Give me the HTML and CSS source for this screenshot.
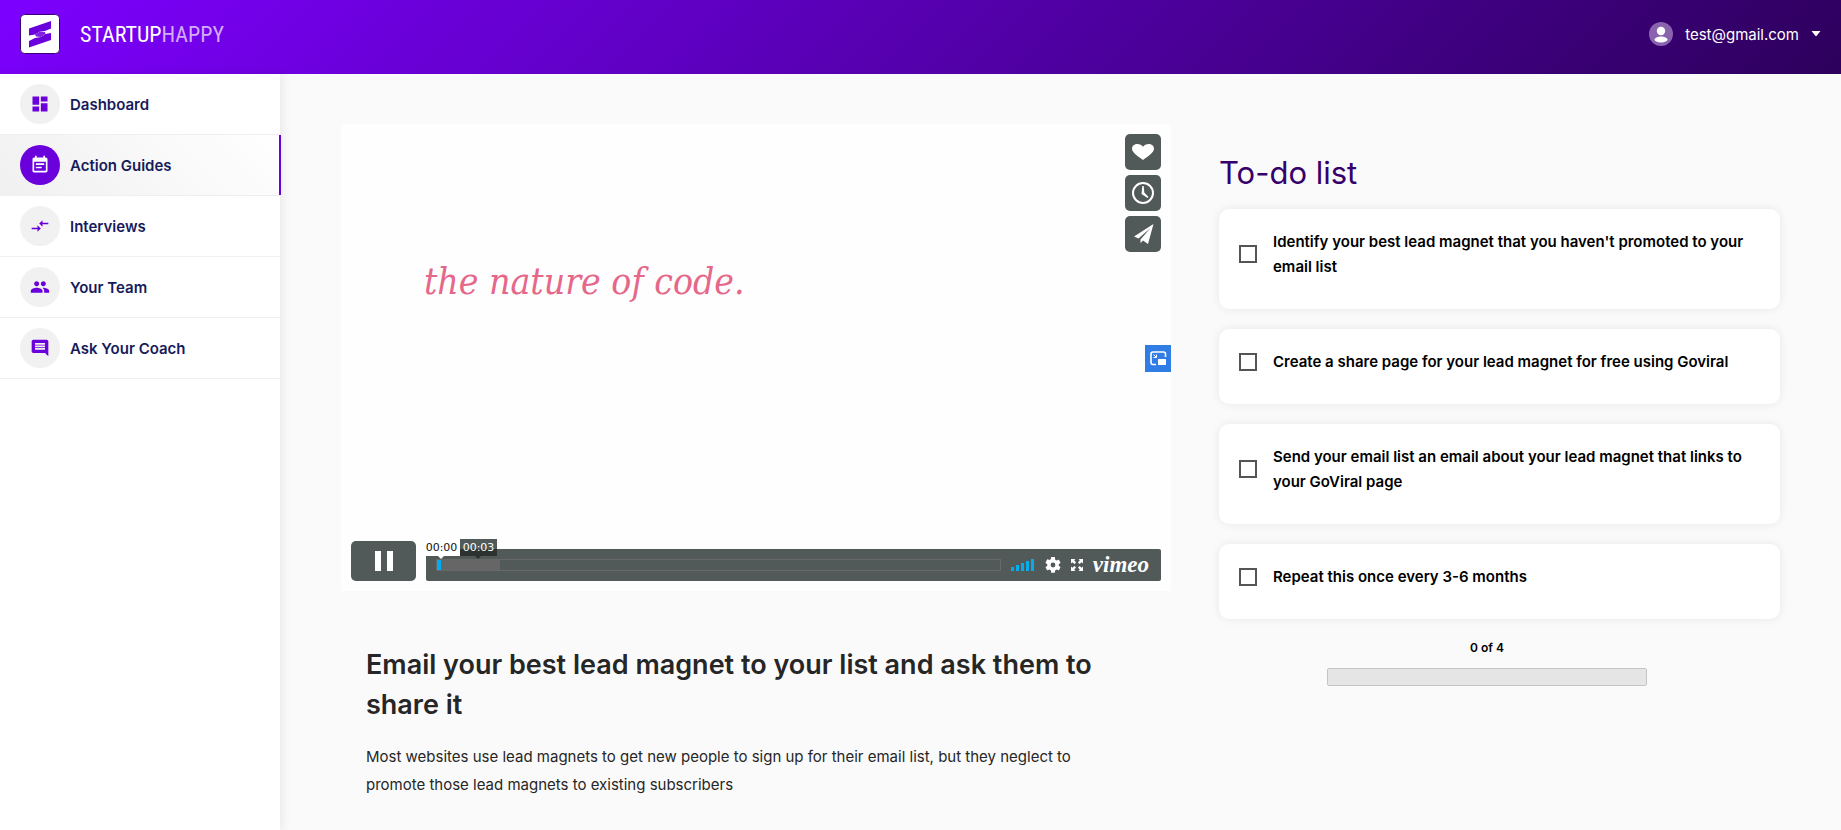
FILE: index.html
```html
<!DOCTYPE html>
<html lang="en">
<head>
<meta charset="utf-8">
<title>StartupHappy – Action Guides</title>
<link rel="stylesheet" href="styles.css">
</head>
<body>
<header class="topbar">
  <a class="brand" href="#">
    <span class="brand-mark">
      <svg viewBox="0 0 40 40" width="40" height="40" aria-hidden="true">
        <rect x="0.5" y="0.5" width="39" height="39" rx="4" fill="#fff" stroke="#3a0078"/>
        <path d="M9 14.500L31 7V14.500L25 17L20 17.500L15 20.500L9 21.500Z" fill="#6a00dc"/>
        <path d="M31 19V26L9 33.500V27L15 24L21 23L25.500 20Z" fill="#6a00dc"/>
        <path d="M15 20.500L20 17.500L25 18L25.500 20L21 23L16 22.500Z" fill="#7e22e0"/>
      </svg>
    </span>
    <span class="brand-name">STARTUP<span class="brand-soft">HAPPY</span></span>
  </a>
  <button class="account" type="button">
    <svg viewBox="0 0 24 24" width="24" height="24" aria-hidden="true">
      <circle cx="12" cy="12" r="12" fill="#8a63ae"/>
      <circle cx="12" cy="9" r="4.200" fill="#fff"/>
      <ellipse cx="12" cy="17.500" rx="6.500" ry="3" fill="#fff"/>
    </svg>
    <span class="account-mail">test@gmail.com</span>
    <svg viewBox="0 0 10 6" width="10" height="6" aria-hidden="true"><path d="M0.500 0H9.500L5.500 5H4.500Z" fill="#fff"/></svg>
  </button>
</header>
<div class="shell">
  <nav class="sidebar">
    <a class="nav-item" href="#">
      <span class="nav-icon"><svg viewBox="0 0 24 24" width="20" height="20"><path d="M3 13h8V3H3v10zm0 8h8v-6H3v6zm10 0h8V11h-8v10zm0-18v6h8V3h-8z"/></svg></span>
      <span>Dashboard</span>
    </a>
    <a class="nav-item nav-item-active" href="#" aria-current="page">
      <span class="nav-icon"><svg viewBox="0 0 24 24" width="20" height="20"><path d="M17 10H7v2h10v-2zm2-7h-1V1h-2v2H8V1H6v2H5c-1.110 0-1.990.9-1.990 2L3 19c0 1.100.89 2 2 2h14c1.100 0 2-.9 2-2V5c0-1.100-.9-2-2-2zm0 16H5V8h14v11zm-5-5H7v2h7v-2z"/></svg></span>
      <span>Action Guides</span>
    </a>
    <a class="nav-item" href="#">
      <span class="nav-icon"><svg viewBox="0 0 24 24" width="20" height="20"><path d="M9.010 14H2v2h7.010v3L13 15l-3.990-4v3zm5.980-1v-3H22V8h-7.010V5L11 9l3.990 4z"/></svg></span>
      <span>Interviews</span>
    </a>
    <a class="nav-item" href="#">
      <span class="nav-icon"><svg viewBox="0 0 24 24" width="20" height="20"><path d="M16 11c1.660 0 2.990-1.340 2.990-3S17.660 5 16 5s-3 1.340-3 3 1.340 3 3 3zm-8 0c1.660 0 2.990-1.340 2.990-3S9.660 5 8 5 5 6.340 5 8s1.340 3 3 3zm0 2c-2.330 0-7 1.170-7 3.500V19h14v-2.500c0-2.330-4.670-3.500-7-3.500zm8 0c-.29 0-.62.02-.97.05 1.160.84 1.970 1.970 1.970 3.450V19h6v-2.500c0-2.330-4.670-3.500-7-3.500z"/></svg></span>
      <span>Your Team</span>
    </a>
    <a class="nav-item" href="#">
      <span class="nav-icon"><svg viewBox="0 0 24 24" width="20" height="20"><path d="M21.990 4c0-1.100-.89-2-1.990-2H4c-1.100 0-2 .9-2 2v12c0 1.100.9 2 2 2h14l4 4-.01-18zM18 14H6v-2h12v2zm0-3H6V9h12v2zm0-3H6V6h12v2z"/></svg></span>
      <span>Ask Your Coach</span>
    </a>
  </nav>
  <main class="content">
    <section class="guide">
      <div class="player">
        <p class="frame-title">the nature of code.</p>
        <div class="side-actions">
          <button type="button" aria-label="Like"><svg viewBox="0 0 36 36" width="36" height="36"><path d="M18 26C14 23 7 19 7 14.800C7 11.500 9.700 10 12.200 10C14.800 10 17 11.300 18 12.800C19 11.300 21.200 10 23.800 10C26.300 10 29 11.500 29 14.800C29 19 22 23 18 26Z" fill="#fff"/></svg></button>
          <button type="button" aria-label="Watch later"><svg viewBox="0 0 36 36" width="36" height="36"><circle cx="18" cy="18" r="10" fill="none" stroke="#fff" stroke-width="2"/><path d="M17.300 11H18.700L19.300 17.500L23.500 22L22.500 23L16.500 19Z" fill="#fff"/></svg></button>
          <button type="button" aria-label="Share"><svg viewBox="0 0 36 36" width="36" height="36"><path d="M28.500 8L9 20.500L13.500 22.500L25.500 12L15.500 23.500V27L18 24.500L23 28Z" fill="#fff"/></svg></button>
        </div>
        <button class="pip" type="button" aria-label="Picture in picture"><svg viewBox="0 0 26 27" width="26" height="27"><path d="M11 19.500H8Q6 19.500 6 17.500V9Q6 7 8 7H18.500Q20.500 7 20.500 9V12" fill="none" stroke="#fff" stroke-width="1.600"/><rect x="13" y="14" width="8" height="6" rx="0.500" fill="#fff"/><path d="M8.500 9.500L11 12M11.500 9.500V12.500H8.500" fill="none" stroke="#fff"/></svg></button>
        <div class="controls">
          <button class="pause" type="button" aria-label="Pause"><span></span><span></span></button>
          <div class="control-bar">
            <div class="track">
              <div class="loaded"></div>
              <span class="time time-now">00:00</span>
              <span class="time time-loaded">00:03</span>
            </div>
            <button type="button" aria-label="Volume"><svg viewBox="0 0 24 12" width="24" height="12"><path d="M0 8h3v4H0zM5 6h3v6H5zM10 4h3v8h-3zM15 2h3v10h-3zM20 0h3v12h-3z" fill="#00adef"/></svg></button>
            <button type="button" aria-label="Settings"><svg viewBox="2 2 20 20" width="16" height="16"><path d="M19.140 12.940c.04-.3.060-.61.060-.94s-.02-.64-.07-.94l2.030-1.580a.49.49 0 0 0 .12-.61l-1.920-3.320a.49.49 0 0 0-.59-.22l-2.390.96a7 7 0 0 0-1.620-.94l-.36-2.540A.48.48 0 0 0 13.920 2h-3.840a.48.48 0 0 0-.47.410l-.36 2.540c-.59.240-1.130.57-1.620.94l-2.390-.96a.48.48 0 0 0-.59.220L2.740 8.870a.48.48 0 0 0 .12.610l2.030 1.580a7.500 7.500 0 0 0 0 1.880l-2.030 1.580a.49.49 0 0 0-.12.610l1.920 3.320c.12.220.37.290.59.220l2.390-.96c.5.380 1.030.7 1.620.94l.36 2.540c.05.240.24.410.48.410h3.840c.24 0 .44-.17.470-.41l.36-2.540a7 7 0 0 0 1.620-.94l2.390.96c.22.080.47 0 .59-.22l1.920-3.320a.48.48 0 0 0-.12-.61zM12 15a3 3 0 1 1 0-6 3 3 0 0 1 0 6z" fill="#fff"/></svg></button>
            <button type="button" aria-label="Full screen"><svg viewBox="0 0 12 12" width="12" height="12"><path d="M0 0H4.500L3.200 1.300L5 3.500L3.500 5L1.300 3.200L0 4.500ZM12 0V4.500L10.700 3.200L8.500 5L7 3.500L8.800 1.300L7.500 0ZM0 12V7.500L1.300 8.800L3.500 7L5 8.500L3.200 10.700L4.500 12ZM12 12H7.500L8.800 10.700L7 8.500L8.500 7L10.700 8.800L12 7.500Z" fill="#fff"/></svg></button>
            <a class="vimeo" href="#">vimeo</a>
          </div>
        </div>
      </div>
      <article class="article">
        <h1>Email your best lead magnet to your list and ask them to share it</h1>
        <p>Most websites use lead magnets to get new people to sign up for their email list, but they neglect to promote those lead magnets to existing subscribers</p>
      </article>
    </section>
    <section class="todo">
      <h2>To-do list</h2>
      <label class="card"><input type="checkbox"><span>Identify your best lead magnet that you haven't promoted to your email list</span></label>
      <label class="card"><input type="checkbox"><span>Create a share page for your lead magnet for free using Goviral</span></label>
      <label class="card"><input type="checkbox"><span>Send your email list an email about your lead magnet that links to your GoViral page</span></label>
      <label class="card"><input type="checkbox"><span>Repeat this once every 3-6 months</span></label>
      <div class="progress">
        <label for="done">0 of 4</label>
        <progress id="done" value="0" max="4"></progress>
      </div>
    </section>
  </main>
</div>
</body>
</html>
```
FILE: styles.css
```css
* {
  box-sizing: border-box;
}

body {
  margin: 0;
  min-height: 100vh;
  display: flex;
  flex-direction: column;
  background: #fafafa;
  color: #262626;
  font-family: Inter, "Liberation Sans", sans-serif;
  font-size: 15px;
}

button {
  margin: 0;
  padding: 0;
  border: 0;
  background: none;
  color: inherit;
  font: inherit;
  cursor: pointer;
}

a {
  color: inherit;
  text-decoration: none;
}

svg {
  display: block;
}

/* Header */

.topbar {
  height: 74px;
  padding: 0 20px 6px;
  display: flex;
  align-items: center;
  justify-content: space-between;
  background: linear-gradient(135deg, #7d00ff, #2d005c);
  color: #fff;
}

.brand {
  display: flex;
  align-items: center;
  gap: 20px;
}

.brand-name {
  font-family: "Roboto Condensed", Roboto, sans-serif;
  font-size: 22px;
  font-weight: 400;
}

.brand-soft {
  color: #d3acf8;
}

.account {
  display: flex;
  align-items: center;
  gap: 12px;
}

/* Sidebar */

.shell {
  flex: 1;
  display: flex;
}

.sidebar {
  flex: none;
  width: 280px;
  background: #fff;
  box-shadow: 2px 0 10px rgba(0, 0, 0, 0.08);
}

.nav-item {
  height: 61px;
  padding: 0 20px;
  display: flex;
  align-items: center;
  gap: 10px;
  border-bottom: 1px solid #efefef;
  color: #161b5c;
  font-weight: 600;
}

.nav-item-active {
  margin-right: -1px;
  background: linear-gradient(45deg, #f0f0f0, #fff);
  box-shadow: inset -2px 0 #6a00dc;
}

.nav-icon {
  width: 40px;
  height: 40px;
  display: grid;
  place-items: center;
  border-radius: 50%;
  background: #f1f1f1;
  fill: #6a00dc;
}

.nav-item-active .nav-icon {
  background: #6a00dc;
  fill: #fff;
}

/* Main columns */

.content {
  flex: 1;
  padding: 50px 61px 30px;
  display: grid;
  grid-template-columns: 830fr 561fr;
  align-items: start;
  gap: 48px;
}

/* Video player */

.player {
  position: relative;
  aspect-ratio: 16 / 9;
  background: #fefefe;
}

.frame-title {
  position: absolute;
  top: 28%;
  left: 10%;
  margin: 0;
  color: #e5688a;
  font: italic 37px/54px "DejaVu Serif Condensed", "DejaVu Serif", serif;
}

.side-actions {
  position: absolute;
  top: 10px;
  right: 10px;
  display: grid;
  gap: 5px;
}

.side-actions button {
  border-radius: 5px;
  background: #515a58;
}

.pip {
  position: absolute;
  top: 221px;
  right: 0;
  background: #2f7de5;
}

.controls {
  position: absolute;
  right: 10px;
  bottom: 10px;
  left: 10px;
  display: flex;
  align-items: flex-end;
  gap: 10px;
}

.pause {
  width: 65px;
  height: 40px;
  display: flex;
  align-items: center;
  justify-content: center;
  gap: 6px;
  border-radius: 5px;
  background: #515a58;
}

.pause span {
  width: 6px;
  height: 20px;
  background: #fff;
}

.control-bar {
  flex: 1;
  height: 32px;
  padding: 0 12px 0 10px;
  display: flex;
  align-items: center;
  gap: 10px;
  border-radius: 2px;
  background: #515a58;
}

.track {
  position: relative;
  flex: 1;
  height: 12px;
  border: 1px solid #686868;
}

.loaded {
  width: 63px;
  height: 10px;
  border-left: 4px solid #00adef;
  background: #666;
}

.time {
  position: absolute;
  bottom: 14px;
  width: 37px;
  height: 17px;
  font: 11px/17px "DejaVu Sans", sans-serif;
  text-align: center;
}

.time::after {
  position: absolute;
  top: 17px;
  left: 15px;
  border: 3px solid transparent;
  border-bottom: 0;
  content: "";
}

.time-now {
  left: -14px;
  background: #fff;
  color: #111;
}

.time-now::after {
  border-top-color: #fff;
}

.time-loaded {
  left: 23px;
  background: linear-gradient(#515a58 60%, #2b3230 60%);
  color: #fff;
}

.time-loaded::after {
  border-top-color: #2b3230;
}

.vimeo {
  color: #fff;
  font: italic bold 23px/32px "Liberation Serif", serif;
}

/* Guide text */

.article {
  padding: 54px 56px 0 25px;
}

.article h1 {
  margin: 0 0 18px;
  font-size: 27px;
  font-weight: 600;
  line-height: 40px;
}

.article p {
  margin: 0;
  font-size: 15px;
  line-height: 28px;
}

/* To-do list */

.todo {
  padding-top: 25px;
  display: grid;
  gap: 20px;
}

.todo h2 {
  margin: 0 0 -8px;
  color: #35006b;
  font-size: 31px;
  font-weight: 400;
  line-height: 48px;
}

.card {
  padding: 20px 20px 30px;
  display: flex;
  align-items: center;
  gap: 16px;
  border-radius: 10px;
  background: #fff;
  box-shadow: 0 0 10px rgba(0, 0, 0, 0.08);
  color: #000;
  font-weight: 600;
  line-height: 25px;
}

.card input {
  flex: none;
  width: 18px;
  height: 18px;
  margin: 0;
  appearance: none;
  border: 2px solid #555;
}

.progress {
  padding-right: 25px;
  display: grid;
  justify-items: center;
  gap: 11px;
  color: #000;
  font-size: 12px;
  font-weight: 600;
  line-height: 18px;
}

.progress progress {
  width: 320px;
  height: 18px;
  appearance: none;
  border: 1px solid #c4c4c4;
  border-radius: 2px;
  background: #e5e5e5;
}

.progress progress::-webkit-progress-bar {
  background: #e5e5e5;
}
```
